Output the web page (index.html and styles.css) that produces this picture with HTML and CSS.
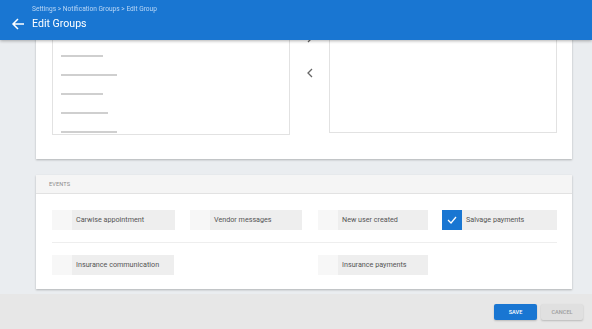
FILE: index.html
```html
<!DOCTYPE html>
<html>
<head>
<meta charset="utf-8">
<link rel="stylesheet" href="styles.css">
</head>
<body>
<div class="app">
  <header class="topbar">
    <svg class="back" width="14" height="14" viewBox="0 0 14 14"><path d="M13 7H2M7 2L2 7l5 5" fill="none" stroke="#fff" stroke-width="1.5"/></svg>
    <div class="titles">
      <div class="crumbs">Settings &gt; Notification Groups &gt; Edit Group</div>
      <div class="title">Edit Groups</div>
    </div>
  </header>
  <main class="content">
    <section class="card transfer">
      <div class="panel left">
        <div class="item"><span class="bar w42"></span></div>
        <div class="item"><span class="bar w56"></span></div>
        <div class="item"><span class="bar w42"></span></div>
        <div class="item"><span class="bar w47"></span></div>
        <div class="item"><span class="bar w56"></span></div>
      </div>
      <div class="arrows">
        <svg width="8" height="10" viewBox="0 0 8 10"><path d="M2 1l4 4-4 4" fill="none" stroke="#666" stroke-width="1.3"/></svg>
        <svg width="8" height="10" viewBox="0 0 8 10"><path d="M6 1L2 5l4 4" fill="none" stroke="#666" stroke-width="1.3"/></svg>
      </div>
      <div class="panel right"></div>
    </section>
    <section class="card events">
      <div class="events-head">EVENTS</div>
      <div class="events-body">
        <div class="erow">
          <div class="ev"><span class="check"></span><span class="label l103">Carwise appointment</span></div>
          <div class="ev"><span class="check"></span><span class="label l92">Vendor messages</span></div>
          <div class="ev"><span class="check"></span><span class="label l90">New user created</span></div>
          <div class="ev"><span class="check on"><svg width="10" height="8" viewBox="0 0 10 8"><path d="M1 4l3 3 5-6" fill="none" stroke="#fff" stroke-width="1.3"/></svg></span><span class="label l95">Salvage payments</span></div>
        </div>
        <div class="erow second">
          <div class="ev"><span class="check"></span><span class="label l102">Insurance communication</span></div>
          <div class="empty"></div>
          <div class="ev"><span class="check"></span><span class="label l90">Insurance payments</span></div>
        </div>
      </div>
    </section>
  </main>
  <footer class="footer">
    <button class="btn save">SAVE</button>
    <button class="btn cancel">CANCEL</button>
  </footer>
</div>
</body>
</html>
```
FILE: styles.css
```css
html, body {
  margin: 0;
  padding: 0;
}
body {
  width: 592px;
  height: 329px;
  overflow: hidden;
  background: #eaedf0;
  font-family: Roboto, "Liberation Sans", sans-serif;
}
.app {
  display: flex;
  flex-direction: column;
  height: 329px;
}
.topbar {
  position: fixed;
  top: 0;
  left: 0;
  right: 0;
  height: 40px;
  background: #1976d2;
  box-shadow: 0 1px 3px rgba(0,0,0,0.3);
  z-index: 5;
  display: flex;
  align-items: flex-start;
}
.back {
  margin: 17px 0 0 11px;
}
.titles {
  margin-left: 7px;
  padding-top: 5px;
}
.crumbs {
  font-size: 6.6px;
  color: #b9d6f5;
  line-height: 8px;
}
.title {
  font-size: 10.6px;
  color: #fff;
  line-height: 14px;
  margin-top: 4px;
}
.content {
  padding: 0 20px 0 36px;
}
.card {
  background: #fff;
  box-shadow: 0 1px 2px rgba(0,0,0,0.25);
}
.transfer {
  margin-top: 16px;
  padding: 0 15px 24px 16px;
  display: flex;
}
.panel {
  height: 115px;
  border: 1px solid #e2e2e2;
  overflow: hidden;
}
.panel.left {
  width: 228px;
  padding: 30px 0 0 8px;
  box-sizing: content-box;
  height: 87px;
}
.panel.right {
  flex: 1;
}
.item {
  height: 19px;
  padding-top: 8px;
  box-sizing: border-box;
}
.bar {
  display: block;
  height: 2px;
  background: #cfcfcf;
}
.w42 { width: 42px; }
.w47 { width: 47px; }
.w56 { width: 56px; }
.arrows {
  width: 39px;
  display: flex;
  flex-direction: column;
  align-items: center;
  gap: 25px;
  padding-top: 17px;
}
.events {
  margin-top: 16px;
}
.events-head {
  height: 18px;
  background: #f5f5f5;
  border-bottom: 1px solid #e2e2e2;
  font-size: 5.6px;
  color: #8a8a8a;
  line-height: 19px;
  padding-left: 13px;
  letter-spacing: 0.1px;
}
.events-body {
  padding: 16px 15px 14px 16px;
}
.erow {
  display: grid;
  grid-template-columns: 138px 128px 124px 1fr;
  padding-bottom: 12px;
  border-bottom: 1px solid #eeeeee;
}
.erow.second {
  padding: 12px 0 0;
  border-bottom: none;
}
.ev {
  display: flex;
  height: 20px;
  justify-self: start;
  white-space: nowrap;
}
.check {
  width: 20px;
  flex: none;
  background: #f7f7f7;
  display: flex;
  align-items: center;
  justify-content: center;
}
.check.on {
  background: #1976d2;
}
.label {
  background: #eeeeee;
  font-size: 7.2px;
  color: #555;
  line-height: 20px;
  padding: 0 0 0 4px;
  box-sizing: border-box;
  white-space: nowrap;
  overflow: hidden;
}
.l90 { width: 90px; }
.l92 { width: 92px; }
.l95 { width: 95px; }
.l102 { width: 102px; }
.l103 { width: 103px; }
.footer {
  margin-top: auto;
  height: 35px;
  background: #e7e7e7;
  display: flex;
  justify-content: flex-end;
  align-items: center;
  gap: 4px;
  padding-right: 9px;
}
.btn {
  height: 16px;
  border: none;
  border-radius: 2px;
  font-family: Roboto, "Liberation Sans", sans-serif;
  font-size: 5.6px;
  font-weight: 500;
  padding: 0;
  box-shadow: 0 1px 2px rgba(0,0,0,0.2);
}
.save {
  width: 43px;
  background: #1976d2;
  color: #fff;
}
.cancel {
  width: 42px;
  background: #e0e0e0;
  color: #9e9e9e;
}
```
